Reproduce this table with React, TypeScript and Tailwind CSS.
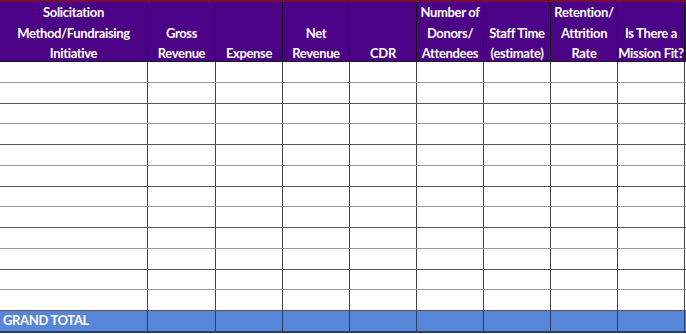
import React from 'react'

const headers: string[][] = [
    ['Solicitation', 'Method/Fundraising', 'Initiative'],
    ['Gross', 'Revenue'],
    ['Expense'],
    ['Net', 'Revenue'],
    ['CDR'],
    ['Number of', 'Donors/', 'Attendees'],
    ['Staff Time', '(estimate)'],
    ['Retention/', 'Attrition', 'Rate'],
    ['Is There a', 'Mission Fit?'],
]

const cols = 'grid grid-cols-[148px_68px_67px_67px_67px_67px_67px_67px_67px]'
const rows = Array.from({ length: 12 })

export default function App() {
    return (
        <div className="w-[686px] h-[334px] bg-white overflow-hidden" style={{ fontFamily: 'Lato, "Open Sans", sans-serif' }}>
            <div className="w-[686px] border-t-2 border-[#7a0c3c]">
                {/* header */}
                <div className={`${cols} h-[60px] bg-[#4b0287] border-b border-[#1a1a1a]`}>
                    {headers.map((h, i) => (
                        <div key={i} className="flex flex-col justify-end items-center border-r border-[#111] -mb-[2px] text-white font-bold text-[13px] leading-[20.5px] tracking-[-0.35px]">
                            {h.map((l) => (
                                <span key={l}>{l}</span>
                            ))}
                        </div>
                    ))}
                </div>
                {/* body */}
                {rows.map((_, r) => (
                    <div key={r} className={`${cols} h-[20.75px] border-b ${r % 2 ? 'border-[#555]' : 'border-[#9a9a9a]'}`}>
                        {headers.map((_, c) => (
                            <div key={c} className="border-r border-[#444]" />
                        ))}
                    </div>
                ))}
                {/* total */}
                <div className={`${cols} h-[22px] bg-[#5786d9] border-b-2 border-[#2b3f66]`}>
                    {headers.map((_, c) => (
                        <div key={c} className="flex items-center border-r border-[#2a3a5a] pl-[3px] text-white font-bold text-[13px] tracking-[-0.35px]">
                            {c === 0 ? 'GRAND TOTAL' : ''}
                        </div>
                    ))}
                </div>
            </div>
        </div>
    )
}
